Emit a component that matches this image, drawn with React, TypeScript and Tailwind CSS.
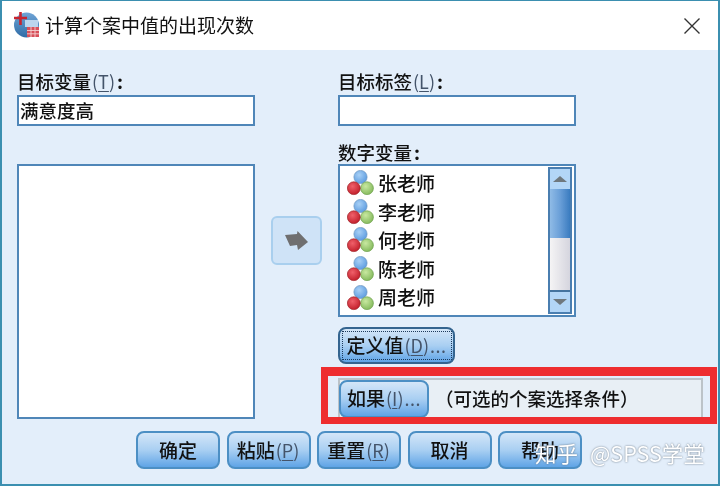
const font = { fontFamily: '"Noto Sans CJK SC", "Liberation Sans", sans-serif' };

function Key({ k }: { k: string }) {
  return (
    <span className="mx-[1px] text-[18px] font-normal text-[#44546a]">
      (<span className="underline underline-offset-2">{k}</span>)
    </span>
  );
}

function Dots() {
  return <span className="text-[18px] font-normal tracking-[0.5px] text-[#44546a]">...</span>;
}

function Btn({ children, className = "" }: { children: React.ReactNode; className?: string }) {
  return (
    <div
      className={
        "flex items-center justify-center rounded-[8px] border-2 border-[#4c8fc4] bg-gradient-to-b from-[#d4e6f8] via-[#a9cff2] to-[#5fa4e6] text-[19px] font-medium text-[#111] " +
        className
      }
    >
      {children}
    </div>
  );
}

function VarIcon() {
  return (
    <svg width="27" height="26" viewBox="0 0 27 26" className="shrink-0">
      <defs>
        <radialGradient id="b" cx="40%" cy="35%" r="70%">
          <stop offset="0%" stopColor="#a8d0f5" />
          <stop offset="100%" stopColor="#5a9ae0" />
        </radialGradient>
        <radialGradient id="r" cx="40%" cy="35%" r="70%">
          <stop offset="0%" stopColor="#f0606a" />
          <stop offset="100%" stopColor="#c01c28" />
        </radialGradient>
        <radialGradient id="g" cx="40%" cy="35%" r="70%">
          <stop offset="0%" stopColor="#c8e8a0" />
          <stop offset="100%" stopColor="#82b85a" />
        </radialGradient>
      </defs>
      <circle cx="13.5" cy="7" r="6.6" fill="url(#b)" stroke="#6d96c0" strokeWidth="0.7" />
      <circle cx="20" cy="18.2" r="6.4" fill="url(#g)" stroke="#6fa04e" strokeWidth="0.7" />
      <circle cx="6.8" cy="18.2" r="6.4" fill="url(#r)" stroke="#9e2228" strokeWidth="0.7" />
    </svg>
  );
}

function AppIcon() {
  return (
    <svg width="27" height="27" viewBox="0 0 27 27" className="shrink-0">
      <defs>
        <linearGradient id="ai" x1="0" y1="0" x2="0" y2="1">
          <stop offset="0%" stopColor="#6fa4d6" />
          <stop offset="100%" stopColor="#2f6ca6" />
        </linearGradient>
      </defs>
      <circle cx="13.5" cy="13" r="12.5" fill="url(#ai)" />
      <rect x="12" y="8" width="13" height="7" fill="#bcd6ee" />
      <path d="M7.5 0v13M1 6h13" stroke="#c8242e" strokeWidth="2.6" />
      <rect x="14" y="15" width="12" height="10" fill="#d8505a" />
      <path d="M14 18.5h12M14 21.8h12M18 15v10M22 15v10" stroke="#f4d0d0" strokeWidth="0.9" />
    </svg>
  );
}

const names = ["张老师", "李老师", "何老师", "陈老师", "周老师"];

export default function App() {
  return (
    <div
      style={font}
      className="relative flex h-[486px] w-[720px] flex-col overflow-hidden border-x-2 border-y border-b-2 border-[#3b8fb0] bg-[#e3eefa] font-medium text-[#111] blur-[0.35px]"
    >
      <div className="flex h-[49px] shrink-0 items-center bg-white pl-[11px] pr-[17px]">
        <AppIcon />
        <span className="ml-[5px] text-[19px] font-normal">计算个案中值的出现次数</span>
        <svg width="18" height="18" viewBox="0 0 18 18" className="ml-auto">
          <path d="M1.5 1.5l15 15M16.5 1.5l-15 15" stroke="#333" strokeWidth="1.4" />
        </svg>
      </div>

      <div className="flex flex-1 flex-col pl-[15px]">
        <div className="flex">
          <div className="flex w-[238px] shrink-0 flex-col">
            <div className="flex h-[45px] items-end pb-[5px] text-[18.5px] leading-none">
              <span>
                目标变量
                <Key k="T" />
                <span className="ml-[1px] font-bold">:</span>
              </span>
            </div>
            <div className="flex h-[31px] items-center border-2 border-[#4f86b8] bg-white pl-[1px] text-[18.5px]">
              满意度高
            </div>
            <div className="mt-[38px] h-[255px] border-2 border-[#4f86b8] bg-white" />
          </div>

          <div className="ml-[16px] mt-[166px] flex h-[49px] w-[51px] shrink-0 items-center justify-center rounded-[6px] border-2 border-[#a9cfee] bg-[#cfe3f7]">
            <svg width="26" height="22" viewBox="0 0 26 22">
              <path d="M1 5l12-1 .5-3L24 12 14 20l-1-5-7 1z" fill="#6f6f70" />
            </svg>
          </div>

          <div className="ml-[16px] flex w-[238px] shrink-0 flex-col">
            <div className="flex h-[45px] items-end pb-[5px] text-[18.5px] leading-none">
              <span>
                目标标签
                <Key k="L" />
                <span className="ml-[1px] font-bold">:</span>
              </span>
            </div>
            <div className="h-[31px] border-2 border-[#4f86b8] bg-white" />
            <div className="mt-[15px] h-[23px] text-[18.5px] leading-[23px]">
              数字变量<span className="ml-[2px] font-bold">:</span>
            </div>
            <div className="flex h-[153px] border-2 border-[#4f86b8] bg-white">
              <div className="flex flex-1 flex-col pl-[7px] pt-[3px]">
                {names.map((n) => (
                  <div key={n} className="flex h-[28.6px] items-center gap-[4px] text-[19px]">
                    <VarIcon />
                    <span>{n}</span>
                  </div>
                ))}
              </div>
              <div className="my-[1px] mr-[2px] flex w-[24px] flex-col border-2 border-[#4a7eb0]">
                <div className="flex h-[20px] items-center justify-center bg-[#b3d6f7]">
                  <div className="h-0 w-0 border-x-[7px] border-b-[6px] border-x-transparent border-b-[#6f787e]" />
                </div>
                <div className="h-[49px] bg-gradient-to-r from-[#8fbbe6] via-[#6a9fd8] to-[#3a7cc0]" />
                <div className="flex-1 border-b-2 border-[#44739f] bg-gradient-to-r from-[#f5f4f5] to-[#d5d5de]" />
                <div className="flex h-[20px] items-center justify-center bg-[#b3d6f7]">
                  <div className="h-0 w-0 border-x-[7px] border-t-[6px] border-x-transparent border-t-[#6f787e]" />
                </div>
              </div>
            </div>
            <Btn className="mt-[10px] h-[37px] w-[117px] border-[#34648f]">
              <div className="flex h-[29px] w-[110px] items-center justify-center whitespace-nowrap border border-dotted border-[#1d3a5c]">
                定义值
                <Key k="D" />
                <Dots />
              </div>
            </Btn>
            <div className="mt-[14px] flex h-[41px] w-[365px] items-center border-2 border-[#bcc3c8] bg-[#e8eff5]">
              <Btn className="-ml-[1px] h-[38px] w-[90px] whitespace-nowrap">
                如果
                <Key k="I" />
                <Dots />
              </Btn>
              <span className="ml-[6px] whitespace-nowrap text-[18.5px]">{"\uFF08可选的个案选择条件\uFF09"}</span>
            </div>
          </div>
        </div>

        <div className="ml-[119px] mt-[12px] flex gap-[6.5px]">
          <Btn className="h-[38px] w-[84px]">确定</Btn>
          <Btn className="h-[38px] w-[84px]">
            粘贴
            <Key k="P" />
          </Btn>
          <Btn className="h-[38px] w-[84px]">
            重置
            <Key k="R" />
          </Btn>
          <Btn className="h-[38px] w-[84px]">取消</Btn>
          <Btn className="h-[38px] w-[84px]">帮助</Btn>
        </div>
      </div>

      <div className="absolute left-[319px] top-[366px] h-[57px] w-[396px] border-x-[7px] border-b-[7px] border-t-[9px] border-[#ee2d2f]" />

      <div className="absolute left-[533px] top-[437px] flex gap-[12px] text-[21.5px] font-normal leading-[30px] text-white [text-shadow:0_0_2px_#5b6a78]">
        <span>知乎</span>
        <span>@SPSS学堂</span>
      </div>
    </div>
  );
}
